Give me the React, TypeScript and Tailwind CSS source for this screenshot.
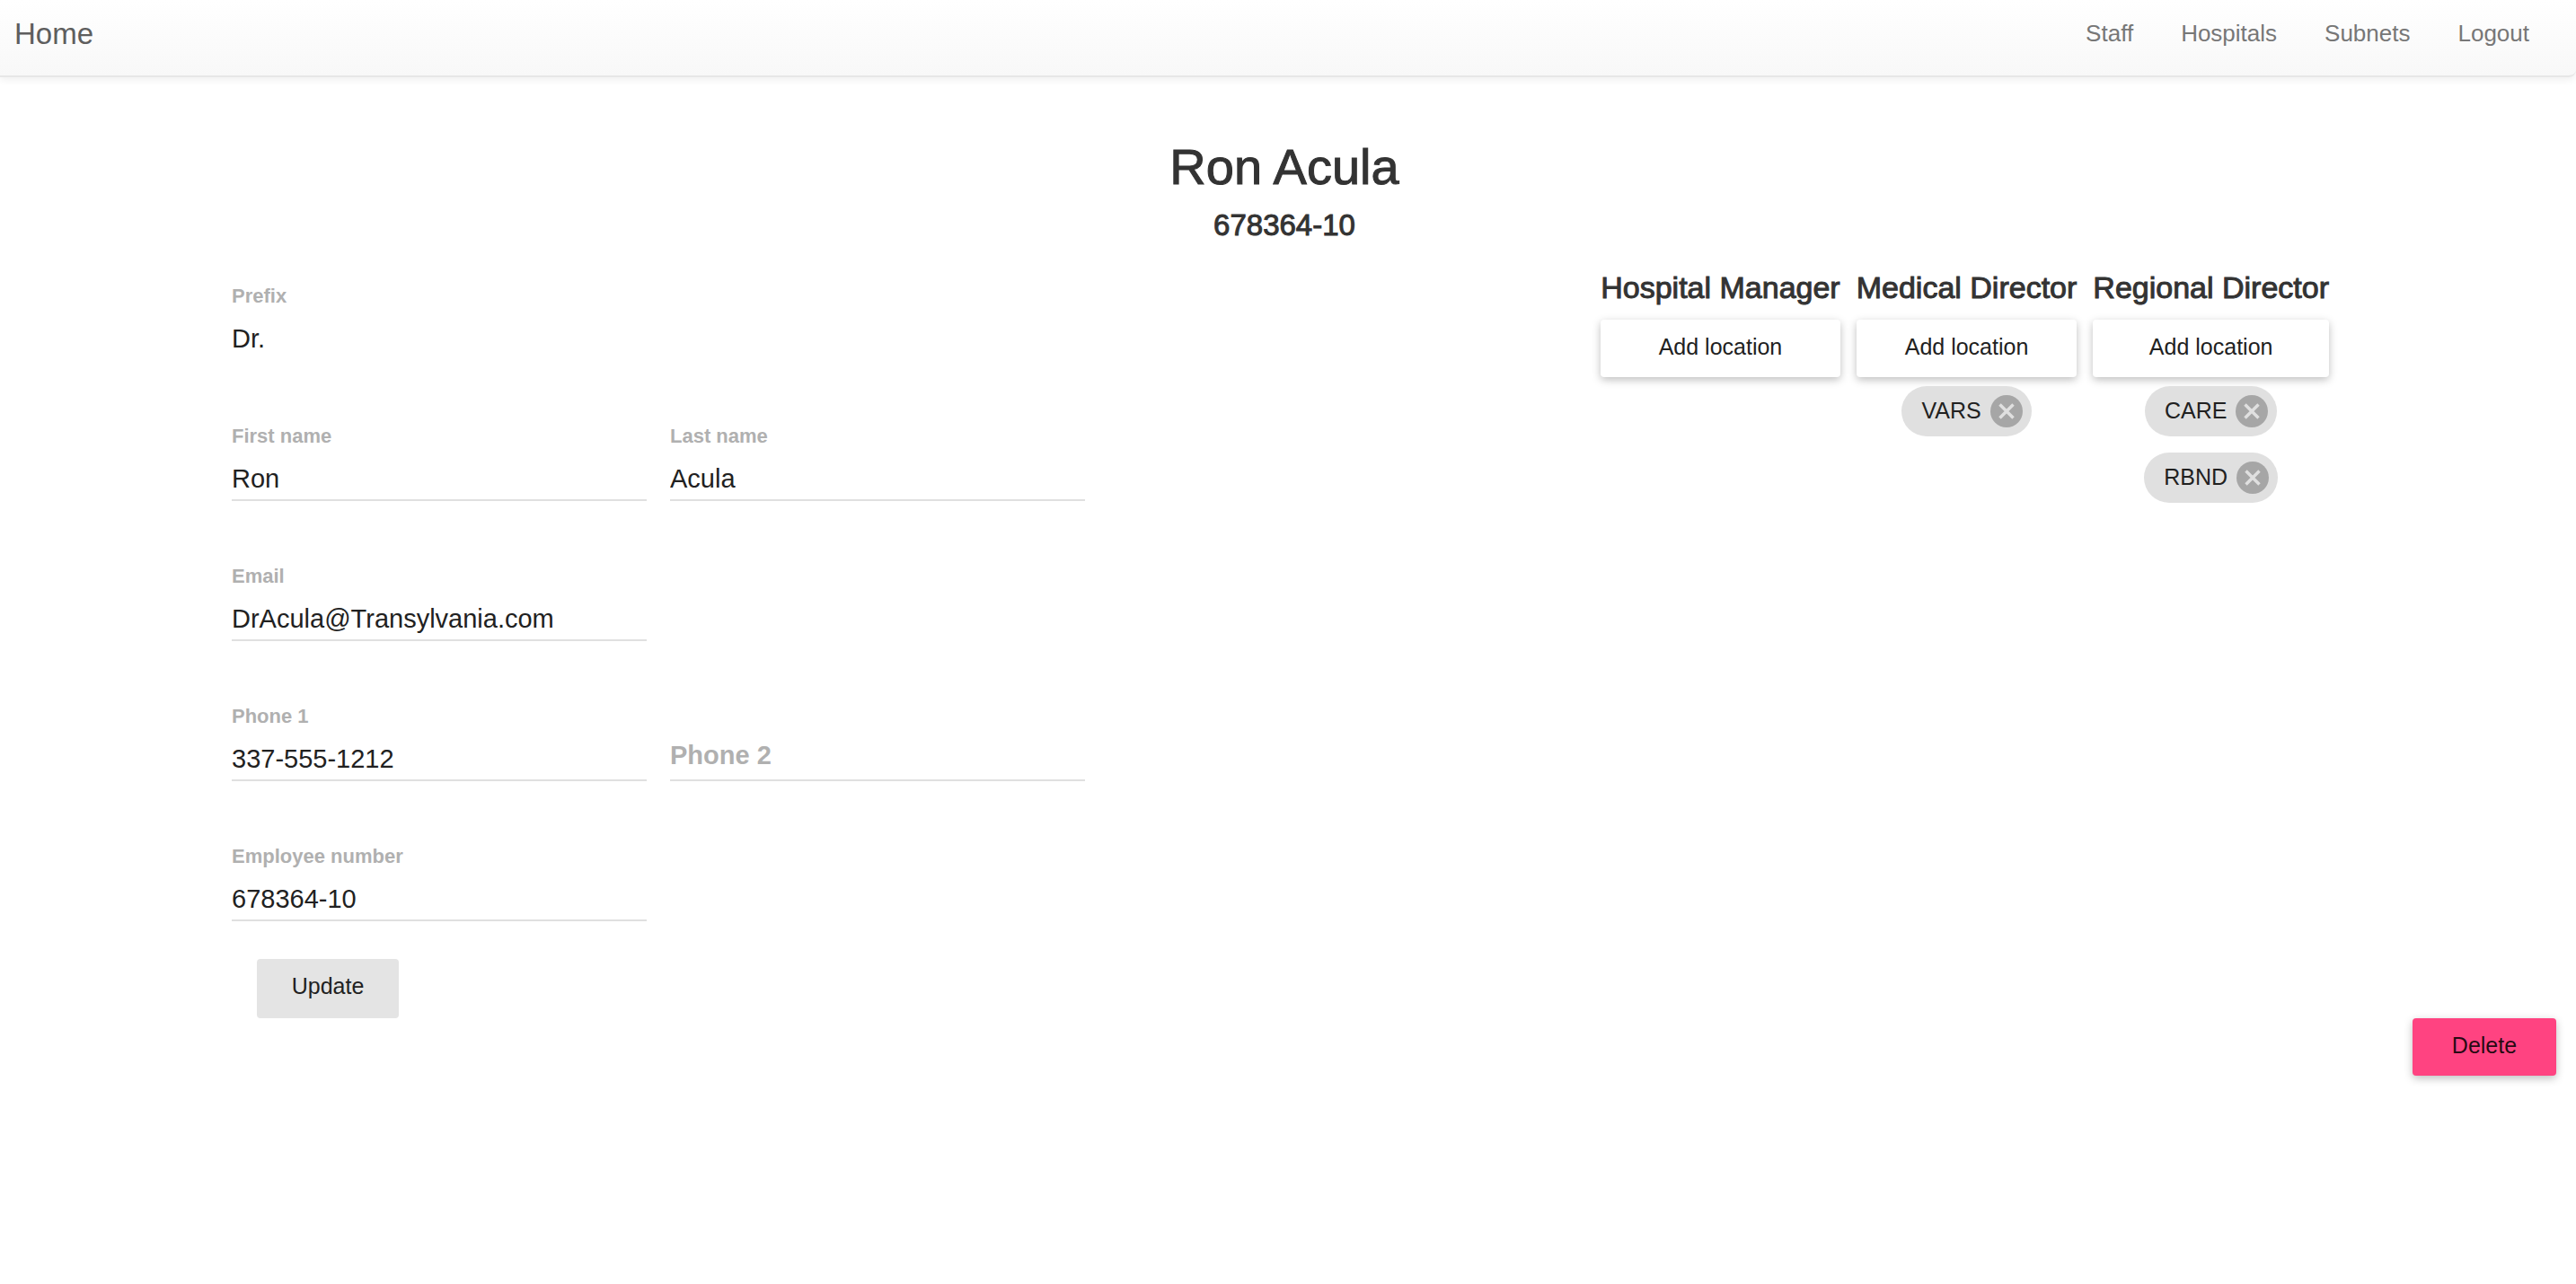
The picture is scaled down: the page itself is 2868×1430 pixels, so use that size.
import React from "react";

const navLinks = ["Staff", "Hospitals", "Subnets", "Logout"];

const roles = [
  { title: "Hospital Manager", locations: [] as string[] },
  { title: "Medical Director", locations: ["VARS"] },
  { title: "Regional Director", locations: ["CARE", "RBND"] },
];

type FieldProps = {
  id: string;
  label: string;
  value?: string;
  plain?: boolean;
};

function Field({ id, label, value, plain }: FieldProps) {
  return (
    <div className="flex h-[156px] w-[462px] flex-col">
      <label htmlFor={id} className="h-[34px] text-[22px] leading-7 font-bold text-[#b0b0b0]">
        {label}
      </label>
      <input
        id={id}
        defaultValue={value}
        className={
          plain
            ? "h-[52px] w-full border-b-2 border-transparent bg-transparent pt-1 text-[29px] text-[#212121] outline-none"
            : "h-[52px] w-full border-b-2 border-[#e0e0e0] bg-transparent pt-1 text-[29px] text-[#212121] outline-none"
        }
      />
    </div>
  );
}

function EmptyField({ id, label }: { id: string; label: string }) {
  return (
    <div className="flex h-[156px] w-[462px] flex-col pt-[34px]">
      <input
        id={id}
        aria-label={label}
        placeholder={label}
        className="h-[52px] w-full border-b-2 border-[#e0e0e0] bg-transparent pb-1 text-[29px] text-[#212121] outline-none placeholder:font-bold placeholder:text-[#b0b0b0] placeholder:opacity-100"
      />
    </div>
  );
}

function Chip({ name }: { name: string }) {
  return (
    <li className="flex h-14 items-center gap-2.5 rounded-full bg-[#e0e0e0] pr-2.5 pl-[22px] text-[25px] text-[#212121]">
      {name}
      <button type="button" aria-label={`Remove ${name}`} className="size-9">
        <svg viewBox="0 0 24 24" className="size-9" aria-hidden="true">
          <circle cx="12" cy="12" r="12" fill="#a6a6a6" />
          <path d="M7 7L17 17M17 7L7 17" stroke="#e0e0e0" strokeWidth="2.3" fill="none" />
        </svg>
      </button>
    </li>
  );
}

export default function App() {
  return (
    <div className="min-h-screen bg-white font-['Liberation_Sans',Arial,sans-serif] text-[#333333]">
      <header className="flex h-[86px] items-center justify-between rounded-br-lg border-b-2 border-[#e7e7e7] bg-linear-to-b from-white to-[#f8f8f8] pr-[52px] pb-2 pl-4 shadow-[0_2px_10px_rgba(0,0,0,0.075)]">
        <a href="#home" className="text-[33px] leading-10 text-[#5e5e5e]">
          Home
        </a>
        <nav className="flex gap-[53px] pb-0.5 text-[26px] leading-10 text-[#777777]">
          {navLinks.map((name) => (
            <a key={name} href={`#${name.toLowerCase()}`}>
              {name}
            </a>
          ))}
        </nav>
      </header>

      <main>
        <div className="flex flex-col items-center pt-[66px] pr-2 text-center">
          <h1 className="text-[56px] leading-[68px] font-normal [-webkit-text-stroke:1px_#333333]">
            Ron Acula
          </h1>
          <p className="pt-2 text-[33px] leading-[46px] [-webkit-text-stroke:1px_#333333]">
            678364-10
          </p>
        </div>

        <div className="flex items-start justify-between pr-[275px] pl-[258px]">
          <form className="pt-[42px]" onSubmit={(e) => e.preventDefault()}>
            <Field id="prefix" label="Prefix" value="Dr." plain />
            <div className="flex gap-[26px]">
              <Field id="first-name" label="First name" value="Ron" />
              <Field id="last-name" label="Last name" value="Acula" />
            </div>
            <Field id="email" label="Email" value="DrAcula@Transylvania.com" />
            <div className="flex gap-[26px]">
              <Field id="phone-1" label="Phone 1" value="337-555-1212" />
              <EmptyField id="phone-2" label="Phone 2" />
            </div>
            <div className="-mb-7">
              <Field id="employee-number" label="Employee number" value="678364-10" />
            </div>
            <button
              type="submit"
              className="ml-7 h-[66px] w-[158px] rounded bg-[#e4e4e4] pb-1 text-[25px] text-[#212121]"
            >
              Update
            </button>
          </form>

          <div className="flex items-start gap-[18px] pt-6">
            {roles.map((role) => (
              <section key={role.title} className="flex flex-col items-center">
                <h2 className="text-[34px] leading-[44px] font-normal whitespace-nowrap [-webkit-text-stroke:1px_#333333]">
                  {role.title}
                </h2>
                <button
                  type="button"
                  className="mt-3.5 h-16 w-full rounded bg-white pb-0.5 text-[25px] text-[#212121] shadow-[0_3px_10px_rgba(0,0,0,0.26)]"
                >
                  Add location
                </button>
                <ul className="flex flex-col items-center gap-[18px] pt-2.5">
                  {role.locations.map((name) => (
                    <Chip key={name} name={name} />
                  ))}
                </ul>
              </section>
            ))}
          </div>
        </div>

        <div className="flex justify-end pr-[22px]">
          <button
            type="button"
            className="h-16 w-40 rounded bg-[#ff4381] pb-0.5 text-[25px] text-black/87 shadow-[0_3px_10px_rgba(0,0,0,0.26)]"
          >
            Delete
          </button>
        </div>
      </main>
    </div>
  );
}
